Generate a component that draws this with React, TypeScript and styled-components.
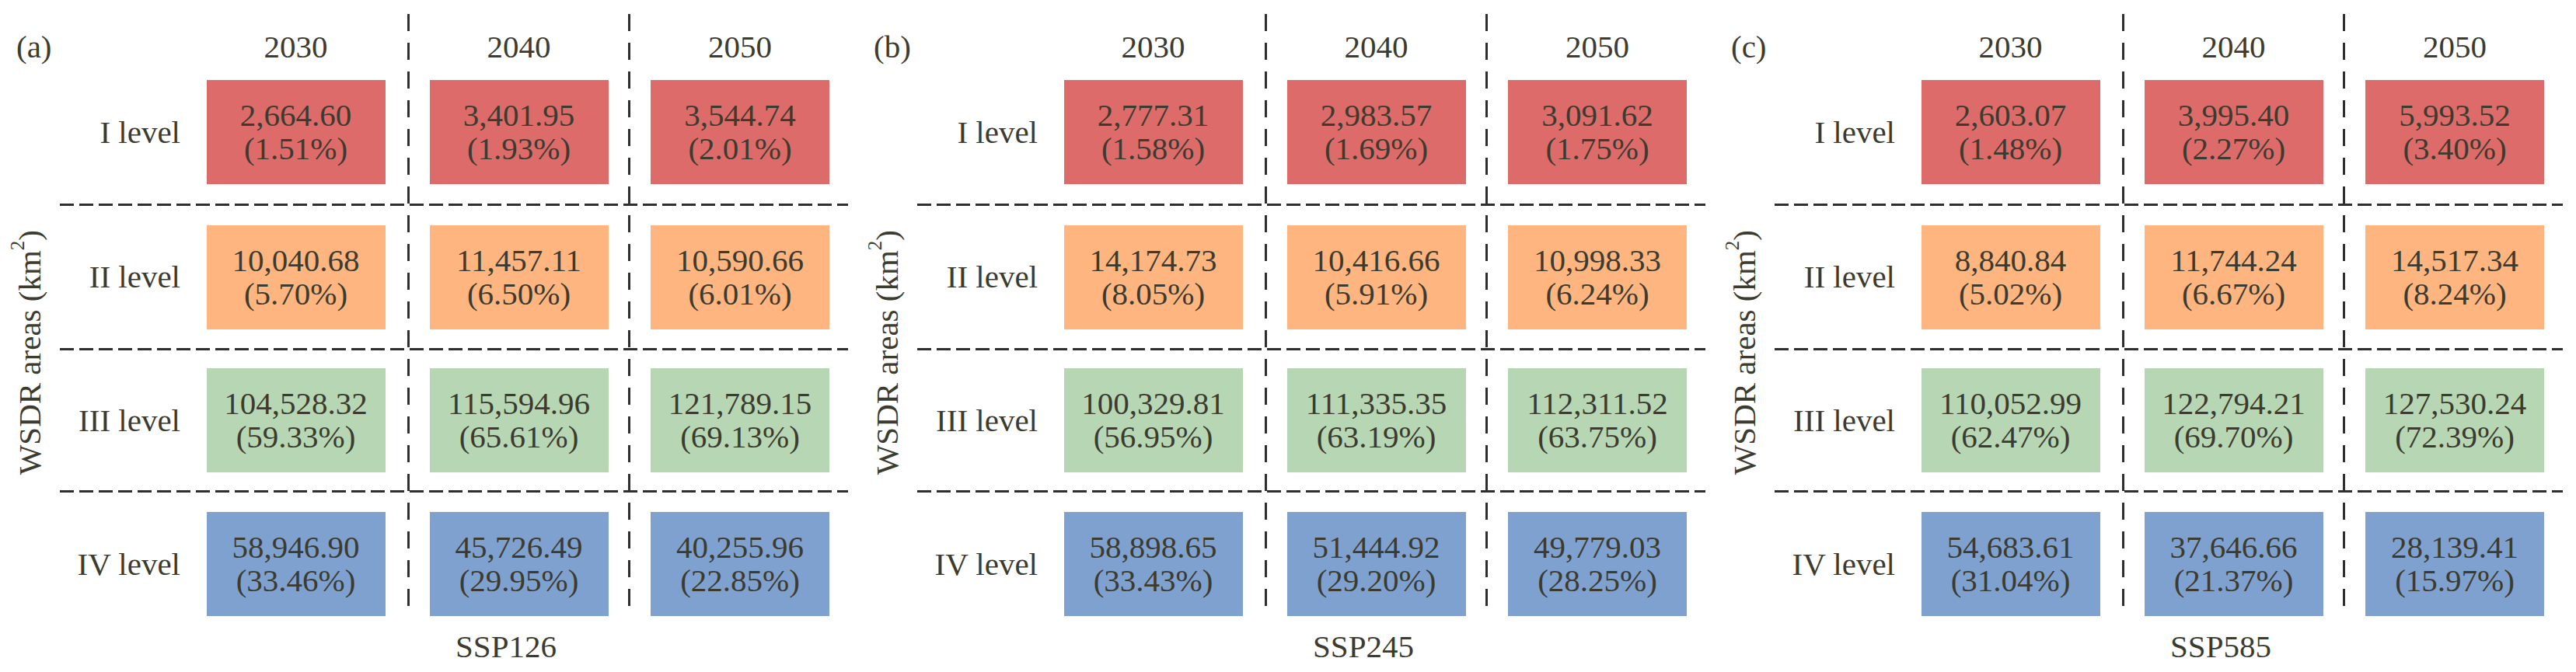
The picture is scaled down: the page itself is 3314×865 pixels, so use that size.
import React from 'react';
import styled, { createGlobalStyle } from 'styled-components';

type Tone = 'red' | 'orange' | 'green' | 'blue';

interface Cell {
  area: string;
  share: string;
}

interface PanelData {
  tag: string;
  scenario: string;
  rows: Cell[][];
}

const tones: Record<Tone, string> = {
  red: '#dc6b69',
  orange: '#ffb57f',
  green: '#b7d7b4',
  blue: '#7fa1cf',
};

const levels: { label: string; tone: Tone }[] = [
  { label: 'I level', tone: 'red' },
  { label: 'II level', tone: 'orange' },
  { label: 'III level', tone: 'green' },
  { label: 'IV level', tone: 'blue' },
];

const years = ['2030', '2040', '2050'];

// grid rows of the data rows and the dashed rules between them
const dataRows = [3, 5, 7, 9];
const ruleRows = [4, 6, 8];
const cellCols = [3, 5, 7];
const dividerCols = [4, 6];

const c = (area: string, share: string): Cell => ({ area, share });

const panels: PanelData[] = [
  {
    tag: '(a)',
    scenario: 'SSP126',
    rows: [
      [c('2,664.60', '1.51%'), c('3,401.95', '1.93%'), c('3,544.74', '2.01%')],
      [c('10,040.68', '5.70%'), c('11,457.11', '6.50%'), c('10,590.66', '6.01%')],
      [c('104,528.32', '59.33%'), c('115,594.96', '65.61%'), c('121,789.15', '69.13%')],
      [c('58,946.90', '33.46%'), c('45,726.49', '29.95%'), c('40,255.96', '22.85%')],
    ],
  },
  {
    tag: '(b)',
    scenario: 'SSP245',
    rows: [
      [c('2,777.31', '1.58%'), c('2,983.57', '1.69%'), c('3,091.62', '1.75%')],
      [c('14,174.73', '8.05%'), c('10,416.66', '5.91%'), c('10,998.33', '6.24%')],
      [c('100,329.81', '56.95%'), c('111,335.35', '63.19%'), c('112,311.52', '63.75%')],
      [c('58,898.65', '33.43%'), c('51,444.92', '29.20%'), c('49,779.03', '28.25%')],
    ],
  },
  {
    tag: '(c)',
    scenario: 'SSP585',
    rows: [
      [c('2,603.07', '1.48%'), c('3,995.40', '2.27%'), c('5,993.52', '3.40%')],
      [c('8,840.84', '5.02%'), c('11,744.24', '6.67%'), c('14,517.34', '8.24%')],
      [c('110,052.99', '62.47%'), c('122,794.21', '69.70%'), c('127,530.24', '72.39%')],
      [c('54,683.61', '31.04%'), c('37,646.66', '21.37%'), c('28,139.41', '15.97%')],
    ],
  },
];

const GlobalStyle = createGlobalStyle`
  html, body {
    margin: 0;
    padding: 0;
    background: #ffffff;
  }
  body {
    font-family: "Liberation Serif", "Times New Roman", serif;
    color: #3c3b30;
  }
`;

const Figure = styled.div`
  display: flex;
  width: 3314px;
  height: 865px;
  background: #ffffff;
`;

const Panel = styled.div`
  display: grid;
  flex: none;
  width: 1103px;
  grid-template-columns: 77px 160px 287px 3px 281px 3px 282px 1fr;
  grid-template-rows: 18px 60px 184px 3px 183px 3px 180px 3px 184px 47px;
  font-size: 41px;
`;

const Tag = styled.div`
  grid-column: 1 / 3;
  grid-row: 2;
  align-self: start;
  margin-top: 22px;
  padding-left: 21px;
  line-height: 41px;
`;

const Year = styled.div<{ $col: number }>`
  grid-column: ${({ $col }) => $col};
  grid-row: 2;
  justify-self: center;
  align-self: start;
  margin-top: 22px;
  line-height: 41px;
`;

const AxisTitle = styled.div`
  grid-column: 1;
  grid-row: 3 / 10;
  justify-self: center;
  align-self: center;
  margin-top: 12px;
  writing-mode: vertical-rl;
  transform: rotate(180deg);
  white-space: nowrap;
  line-height: 41px;
`;

const Sup = styled.span`
  font-size: 25px;
  vertical-align: 15px;
  line-height: 0;
`;

const LevelLabel = styled.div<{ $row: number }>`
  grid-column: 2;
  grid-row: ${({ $row }) => $row};
  justify-self: end;
  align-self: center;
  padding-right: 5px;
  line-height: 41px;
  white-space: nowrap;
`;

const ValueBox = styled.div<{ $row: number; $col: number; $tone: Tone }>`
  grid-column: ${({ $col }) => $col};
  grid-row: ${({ $row }) => $row};
  justify-self: center;
  align-self: center;
  width: 230px;
  height: 134px;
  display: flex;
  flex-direction: column;
  align-items: center;
  justify-content: center;
  background: ${({ $tone }) => tones[$tone]};
  line-height: 43px;
  white-space: nowrap;
`;

const Divider = styled.div<{ $col: number }>`
  grid-column: ${({ $col }) => $col};
  grid-row: 2 / 10;
  margin-bottom: 26px;
  background: repeating-linear-gradient(
    to bottom,
    #2e2e2e 0 22px,
    transparent 22px 37px
  );
`;

const Rule = styled.div<{ $row: number }>`
  grid-column: 2 / 8;
  grid-row: ${({ $row }) => $row};
  margin-right: 2px;
  background: repeating-linear-gradient(
    to right,
    #2e2e2e 0 18px,
    transparent 18px 25px
  );
`;

const Scenario = styled.div`
  grid-column: 3 / 8;
  grid-row: 10;
  padding-right: 28px;
  text-align: center;
  line-height: 28px;
`;

const ScenarioPanel: React.FC<{ data: PanelData }> = ({ data }) => (
  <Panel>
    <Tag>{data.tag}</Tag>
    {years.map((year, i) => (
      <Year key={year} $col={cellCols[i]}>
        {year}
      </Year>
    ))}
    <AxisTitle>
      WSDR areas (km<Sup>2</Sup>)
    </AxisTitle>
    {dividerCols.map((col) => (
      <Divider key={col} $col={col} />
    ))}
    {ruleRows.map((row) => (
      <Rule key={row} $row={row} />
    ))}
    {levels.map((level, r) => (
      <React.Fragment key={level.label}>
        <LevelLabel $row={dataRows[r]}>{level.label}</LevelLabel>
        {data.rows[r].map((cell, i) => (
          <ValueBox key={i} $row={dataRows[r]} $col={cellCols[i]} $tone={level.tone}>
            <span>{cell.area}</span>
            <span>({cell.share})</span>
          </ValueBox>
        ))}
      </React.Fragment>
    ))}
    <Scenario>{data.scenario}</Scenario>
  </Panel>
);

const App: React.FC = () => (
  <>
    <GlobalStyle />
    <Figure>
      {panels.map((p) => (
        <ScenarioPanel key={p.tag} data={p} />
      ))}
    </Figure>
  </>
);

export default App;
